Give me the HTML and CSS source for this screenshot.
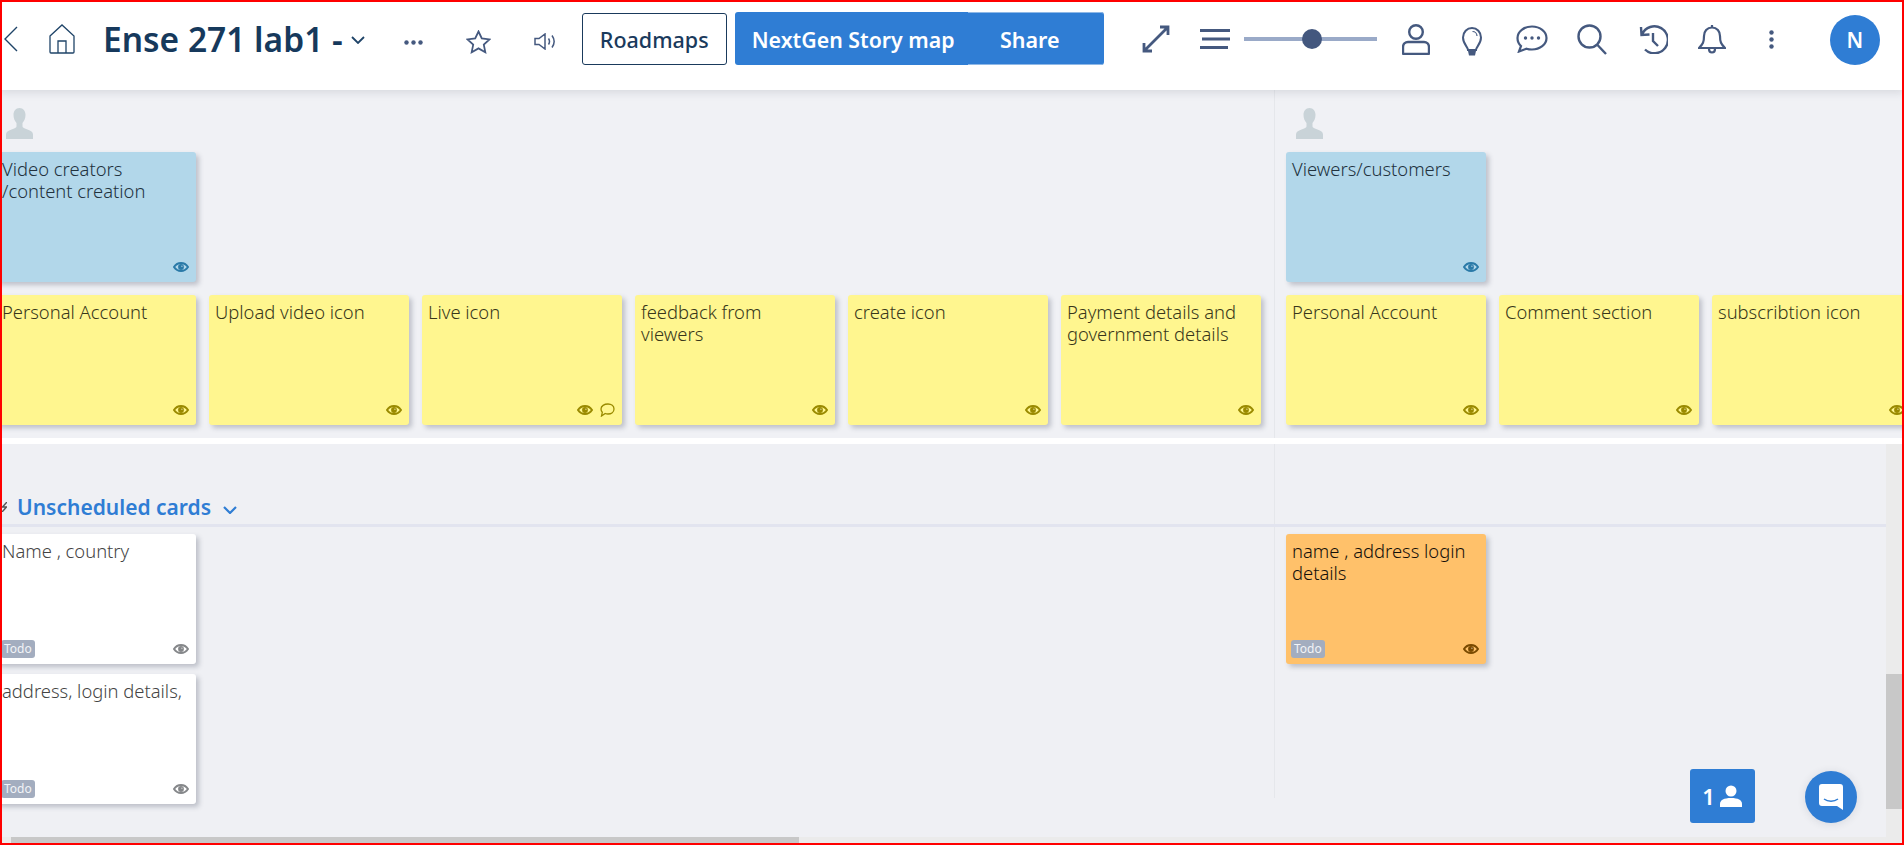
FILE: index.html
```html
<!DOCTYPE html>
<html lang="en">
<head>
  <meta charset="UTF-8">
  <title>Ense 271 lab1 - Story map</title>
  <link rel="stylesheet" href="styles.css">
</head>
<body>

<!-- shared icons -->
<svg class="sprite" xmlns="http://www.w3.org/2000/svg">
  <symbol id="eye" viewBox="0 0 16 10">
    <path d="M1 5C3 2 5.400 1 8 1s5 1 7 4c-2 3-4.400 4-7 4S3 8 1 5z" fill="none" stroke="currentColor" stroke-width="2"/>
    <circle cx="8" cy="5" r="2.900" fill="currentColor"/>
    <circle cx="8.900" cy="4.200" r=".8" fill="#fff" fill-opacity=".55"/>
  </symbol>
  <symbol id="persona" viewBox="0 0 27 31">
    <path d="M13.500 0c3.800 0 6 3 6 6.800 0 3.200-1.200 6.400-3 8.200v3.400c0 1.200 2 2 5 3 3.400 1.100 5.500 2.600 5.500 5V31H0v-4.600c0-2.400 2.100-3.900 5.500-5 3-1 5-1.800 5-3V15c-1.800-1.800-3-5-3-8.200C7.500 3 9.700 0 13.500 0z" fill="currentColor"/>
  </symbol>
</svg>

<!-- === Top bar === -->
<header class="topbar">
  <svg class="ico ico-back" viewBox="0 0 14 26"><path d="M13 1 1 13l12 12"/></svg>
  <svg class="ico ico-home" viewBox="0 0 26 30"><path d="M1 12 13 1l12 11v16a1 1 0 0 1-1 1H2a1 1 0 0 1-1-1zM9 29V17h8v12"/></svg>
  <h1 class="board-title">Ense 271 lab1 -</h1>
  <svg class="ico ico-caret" viewBox="0 0 14 8"><path d="m1 1 6 6 6-6"/></svg>
  <svg class="ico-dots" viewBox="0 0 19 5"><circle cx="2.500" cy="2.500" r="2.200"/><circle cx="9.500" cy="2.500" r="2.200"/><circle cx="16.500" cy="2.500" r="2.200"/></svg>
  <svg class="ico ico-star" viewBox="0 0 25 24"><path d="m12.500 1.500 3.300 7 7.700.9-5.700 5.200 1.500 7.600-6.800-3.800-6.800 3.800 1.500-7.600L1.500 9.400l7.700-.9z"/></svg>
  <svg class="ico ico-sound" viewBox="0 0 22 17"><path d="M1 5.500h4L11 1v15l-6-4.500H1zM14.500 5.500c1.200 1.800 1.200 4.200 0 6M18 2.500c2.600 3.600 2.600 8.400 0 12"/></svg>
  <button class="btn-roadmaps">Roadmaps</button>
  <div class="btn-group">
    <button class="btn-story">NextGen Story map</button>
    <button class="btn-share">Share</button>
  </div>
  <svg class="ico ico-expand" viewBox="0 0 28 28"><path d="M2 26 26 2M18 2h8v8M2 18v8h8"/></svg>
  <svg class="ico ico-menu" viewBox="0 0 30 20"><path d="M0 1.500h30M2 10h28M0 18.500h28"/></svg>
  <div class="zoom-slider"><span class="zoom-knob"></span></div>
  <svg class="ico ico-user" viewBox="0 0 28 31"><circle cx="14" cy="8" r="6.800"/><path d="M6 18h16a5 5 0 0 1 5 5v6a1 1 0 0 1-1 1H2a1 1 0 0 1-1-1v-6a5 5 0 0 1 5-5z"/></svg>
  <svg class="ico ico-bulb" viewBox="0 0 20 29"><path d="M6 23c0-3-5-6-5-12.500C1 5 5 1 10 1s9 4 9 9.500C19 17 14 20 14 23z"/><path d="M10.500 4.500c2.500 0 4.500 2 4.500 4.500" stroke-width="1.200"/><path d="M6 24h8l-1 4.500H7z" class="ico-fill"/></svg>
  <svg class="ico ico-chat" viewBox="0 0 32 28"><path d="M16 1.500c8 0 14.500 5 14.500 11.500S24 24.500 16 24.500c-2 0-4-.3-5.500-.8L3 26.500l2-5.500C2.800 19 1.500 16 1.500 13 1.500 6.500 8 1.500 16 1.500z"/><circle class="ico-fill" cx="9.500" cy="13" r="1.700"/><circle class="ico-fill" cx="16" cy="13" r="1.700"/><circle class="ico-fill" cx="22.500" cy="13" r="1.700"/></svg>
  <svg class="ico ico-search" viewBox="0 0 30 31"><circle cx="12.500" cy="12.500" r="11"/><path d="m20.500 21 8.500 9"/></svg>
  <svg class="ico ico-history" viewBox="0 0 31 29"><path d="M5 9.500A13.500 13.500 0 1 1 8 24.500M4 2l.5 8 8-.5M16 8v8l5 5"/></svg>
  <svg class="ico ico-bell" viewBox="0 0 28 30"><path d="M14 3.500c5 0 8 4 8 8.500 0 6 1 8 5 12H1c4-4 5-6 5-12 0-4.500 3-8.500 8-8.500zM14 1v2.500M11 25c0 2 1.300 3.500 3 3.500s3-1.500 3-3.500"/></svg>
  <svg class="ico-kebab" viewBox="0 0 5 19"><circle cx="2.500" cy="2.500" r="2.200"/><circle cx="2.500" cy="9.500" r="2.200"/><circle cx="2.500" cy="16.500" r="2.200"/></svg>
  <div class="avatar">N</div>
</header>

<!-- === Story map, activities and steps === -->
<section class="board-top">
  <div class="activity activity-first">
    <svg class="persona"><use href="#persona"/></svg>
    <div class="card card-blue">
      <p class="card-text">Video creators /content creation</p>
      <div class="card-foot"><svg class="eye"><use href="#eye"/></svg></div>
    </div>
    <div class="card-row">
      <div class="card card-yellow">
        <p class="card-text">Personal Account</p>
        <div class="card-foot"><svg class="eye"><use href="#eye"/></svg></div>
      </div>
      <div class="card card-yellow">
        <p class="card-text">Upload video icon</p>
        <div class="card-foot"><svg class="eye"><use href="#eye"/></svg></div>
      </div>
      <div class="card card-yellow">
        <p class="card-text">Live icon</p>
        <div class="card-foot">
          <svg class="eye"><use href="#eye"/></svg>
          <svg class="comment" viewBox="0 0 15 14"><path d="M8 1c3.300 0 6 2 6 5s-2.700 5-6 5c-1 0-2-.2-2.800-.5L1.500 13l.8-3.700C1.400 8.400 1 7.300 1 6c0-3 3.200-5 7-5z"/></svg>
        </div>
      </div>
      <div class="card card-yellow">
        <p class="card-text">feedback from viewers</p>
        <div class="card-foot"><svg class="eye"><use href="#eye"/></svg></div>
      </div>
      <div class="card card-yellow">
        <p class="card-text">create icon</p>
        <div class="card-foot"><svg class="eye"><use href="#eye"/></svg></div>
      </div>
      <div class="card card-yellow">
        <p class="card-text">Payment details and government details</p>
        <div class="card-foot"><svg class="eye"><use href="#eye"/></svg></div>
      </div>
    </div>
  </div>
  <div class="activity activity-second">
    <svg class="persona"><use href="#persona"/></svg>
    <div class="card card-blue">
      <p class="card-text">Viewers/customers</p>
      <div class="card-foot"><svg class="eye"><use href="#eye"/></svg></div>
    </div>
    <div class="card-row">
      <div class="card card-yellow">
        <p class="card-text">Personal Account</p>
        <div class="card-foot"><svg class="eye"><use href="#eye"/></svg></div>
      </div>
      <div class="card card-yellow">
        <p class="card-text">Comment section</p>
        <div class="card-foot"><svg class="eye"><use href="#eye"/></svg></div>
      </div>
      <div class="card card-yellow">
        <p class="card-text">subscribtion icon</p>
        <div class="card-foot"><svg class="eye"><use href="#eye"/></svg></div>
      </div>
    </div>
  </div>
</section>

<!-- === Unscheduled lane === -->
<section class="board-bottom">
  <div class="lane-view">
    <div class="lane">
      <div class="lane-head">
        <svg class="lane-grip" viewBox="0 0 5 10"><path d="M5 0 .5 5h4L0 10"/></svg>
        <h2 class="lane-title">Unscheduled cards</h2>
        <svg class="lane-caret" viewBox="0 0 14 8"><path d="m1 1 6 6 6-6"/></svg>
      </div>
      <div class="lane-cols">
        <div class="lane-col lane-col-first">
          <div class="card card-white">
            <p class="card-text">Name , country</p>
            <div class="card-foot"><span class="badge">Todo</span><svg class="eye"><use href="#eye"/></svg></div>
          </div>
          <div class="card card-white">
            <p class="card-text">address, login details,</p>
            <div class="card-foot"><span class="badge">Todo</span><svg class="eye"><use href="#eye"/></svg></div>
          </div>
        </div>
        <div class="lane-col lane-col-second">
          <div class="card card-orange">
            <p class="card-text">name , address login details</p>
            <div class="card-foot"><span class="badge">Todo</span><svg class="eye"><use href="#eye"/></svg></div>
          </div>
        </div>
      </div>
    </div>
    <div class="hbar"><span class="hbar-thumb"></span></div>
  </div>
  <div class="vbar"><span class="vbar-thumb"></span></div>

  <button class="online-btn">1
    <svg viewBox="0 0 24 22"><circle cx="12" cy="6" r="5.500"/><path d="M1 22v-3c0-4 4-6 11-6s11 2 11 6v3z"/></svg>
  </button>
  <button class="help-btn">
    <svg viewBox="0 0 24 26"><path d="M3 0h18a3 3 0 0 1 3 3v23l-6-4H3a3 3 0 0 1-3-3V3a3 3 0 0 1 3-3z"/><path class="help-smile" d="M5 15c4 3 10 3 14 0"/></svg>
  </button>
</section>

<div class="frame"></div>

</body>
</html>
```

FILE: styles.css
```css
/* ===== Global ===== */
* {
  margin: 0;
  padding: 0;
  box-sizing: border-box;
}
html, body {
  height: 845px;
  overflow: hidden;
}
body {
  font-family: "Noto Sans", "Open Sans", sans-serif;
  background: #fff;
  color: #1a3a5c;
  display: flex;
  flex-direction: column;
}
button {
  font-family: inherit;
  border: none;
  cursor: pointer;
}
.sprite {
  display: none;
}
/* red outline of the capture */
.frame {
  position: fixed;
  inset: 0;
  border: 2px solid #f00;
  pointer-events: none;
  z-index: 10;
}

/* ===== Top bar ===== */
.topbar {
  height: 90px;
  flex: none;
  background: #fff;
  display: flex;
  align-items: center;
  box-shadow: 0 2px 9px rgba(40, 50, 70, 0.14);
  position: relative;
  z-index: 2;
  white-space: nowrap;
}
.ico {
  flex: none;
  fill: none;
  stroke: #45597f;
  stroke-width: 2.4;
}
.ico-fill {
  fill: #45597f;
  stroke: none;
}
.ico-back {
  width: 14px;
  height: 26px;
  margin-left: 4px;
  margin-top: -13px;
  stroke: #1f4468;
  stroke-width: 1.4;
}
.ico-home {
  width: 26px;
  height: 30px;
  margin-left: 31px;
  margin-top: -12px;
  stroke: #1f4468;
  stroke-width: 1.3;
}
.board-title {
  margin-left: 28px;
  margin-top: -12px;
  font-size: 33.5px;
  font-weight: 600;
  line-height: 40px;
  color: #16395c;
}
.ico-caret {
  width: 14px;
  height: 8px;
  margin-left: 8px;
  margin-top: -10px;
  stroke: #1f4468;
  stroke-width: 1.800;
}
.ico-dots {
  flex: none;
  width: 19px;
  height: 5px;
  margin-left: 39px;
  margin-top: -6px;
  fill: #45597f;
}
.ico-star {
  width: 25px;
  height: 24px;
  margin-left: 43px;
  margin-top: -7px;
  stroke-width: 1.800;
}
.ico-sound {
  width: 22px;
  height: 17px;
  margin-left: 43px;
  margin-top: -7px;
  stroke-width: 1.500;
}
.btn-roadmaps {
  width: 145px;
  height: 52px;
  margin-left: 26px;
  margin-top: -13px;
  background: #fff;
  border: 1px solid #1a3a5c;
  border-radius: 3px;
  font-size: 21.5px;
  font-weight: 500;
  color: #1a3a5c;
  padding-top: 1px;
}
.btn-group {
  display: flex;
  flex: none;
  width: 369px;
  height: 53px;
  margin-left: 8px;
  margin-top: -13px;
  background: #2f7dd4;
  border-radius: 3px;
  color: #fff;
}
.btn-story, .btn-share {
  background: none;
  color: #fff;
  font-weight: 600;
  padding-top: 2px;
}
.btn-story {
  width: 233px;
  padding-left: 17px;
  text-align: left;
  font-size: 21.3px;
}
.btn-share {
  width: 136px;
  padding-right: 12px;
  border-top: 1px solid #8fb8e6;
  border-bottom: 1px solid #8fb8e6;
  border-radius: 0 3px 3px 0;
  font-size: 21.5px;
}
.ico-expand {
  width: 28px;
  height: 28px;
  margin-left: 38px;
  margin-top: -12px;
  stroke-width: 2.800;
}
.ico-menu {
  width: 30px;
  height: 20px;
  margin-left: 30px;
  margin-top: -12px;
  stroke-width: 2.800;
}
.zoom-slider {
  flex: none;
  width: 133px;
  height: 4px;
  margin-left: 14px;
  margin-top: -12px;
  background: #9aaac8;
  display: flex;
  align-items: center;
  padding-left: 58px;
}
.zoom-knob {
  width: 20px;
  height: 20px;
  border-radius: 50%;
  background: #43577e;
  flex: none;
}
.ico-user {
  width: 28px;
  height: 31px;
  margin-left: 25px;
  margin-top: -12px;
}
.ico-bulb {
  width: 20px;
  height: 29px;
  margin-left: 32px;
  margin-top: -8px;
  stroke-width: 2;
}
.ico-chat {
  width: 32px;
  height: 28px;
  margin-left: 34px;
  margin-top: -12px;
  stroke-width: 2.200;
}
.ico-search {
  width: 30px;
  height: 31px;
  margin-left: 29px;
  margin-top: -12px;
}
.ico-history {
  width: 31px;
  height: 29px;
  margin-left: 30px;
  margin-top: -12px;
}
.ico-bell {
  width: 28px;
  height: 30px;
  margin-left: 30px;
  margin-top: -12px;
  stroke-width: 2.200;
}
.ico-kebab {
  flex: none;
  width: 5px;
  height: 19px;
  margin-left: 43px;
  margin-top: -12px;
  fill: #45597f;
}
.avatar {
  flex: none;
  width: 50px;
  height: 50px;
  margin-left: 56px;
  margin-top: -10px;
  border-radius: 50%;
  background: #2f7dd4;
  color: #fff;
  display: flex;
  align-items: center;
  justify-content: center;
  font-size: 21px;
  font-weight: 600;
}

/* ===== Cards ===== */
.card {
  flex: none;
  width: 200px;
  height: 130px;
  padding: 6px 7px 6px 6px;
  border-radius: 3px;
  display: flex;
  flex-direction: column;
  box-shadow: 3px 3px 5px rgba(60, 70, 90, 0.28);
}
.card-text {
  flex: 1;
  padding-right: 3px;
  font-size: 18.4px;
  line-height: 22px;
  font-weight: 300;
}
.card-foot {
  height: 18px;
  margin-left: -1px;
  display: flex;
  align-items: center;
  justify-content: flex-end;
  gap: 7px;
}
.eye {
  width: 16px;
  height: 10px;
  flex: none;
}
.comment {
  width: 15px;
  height: 14px;
  flex: none;
  fill: none;
  stroke: currentColor;
  stroke-width: 1.300;
}
.badge {
  margin-right: auto;
  height: 18px;
  padding: 0 3px;
  border-radius: 3px;
  background: #a3adbf;
  color: #f2f4f7;
  font-size: 12px;
  line-height: 17px;
}
.card-blue {
  background: #b2d7ea;
  color: #22323e;
}
.card-blue .eye {
  color: #2a7aa8;
}
.card-yellow {
  background: #fff68f;
  color: #38361a;
}
.card-yellow .card-foot {
  color: #9a8a00;
}
.card-white {
  background: #fff;
  color: #444;
}
.card-white .eye {
  color: #85878a;
}
.card-orange {
  background: #ffc16a;
  color: #14100a;
}
.card-orange .eye {
  color: #7a4a00;
}

/* ===== Story map ===== */
.board-top {
  height: 348px;
  flex: none;
  display: flex;
  background: #f0f1f5;
  overflow: hidden;
}
.activity {
  flex: none;
}
.activity-first {
  width: 1279px;
  margin-left: -4px;
  border-right: 1px solid #e5e7eb;
}
.activity-second {
  padding-left: 11px;
}
.persona {
  display: block;
  width: 27px;
  height: 31px;
  margin: 18px 0 13px 10px;
  color: #c9d3d8;
}
.card-row {
  display: flex;
  gap: 13px;
  margin-top: 13px;
}

/* ===== Unscheduled lane ===== */
.board-bottom {
  flex: 1;
  margin-top: 6px;
  padding-bottom: 2px;
  background: #eff0f4;
  display: flex;
  position: relative;
  overflow: hidden;
}
.lane-view {
  flex: 1;
  min-width: 0;
  display: flex;
  flex-direction: column;
}
.lane {
  flex: 1;
  overflow: hidden;
}
.lane-head {
  height: 83px;
  padding: 46px 0 0 2px;
  display: flex;
  align-items: center;
  border-bottom: 3px solid #e2e4ef;
  background: linear-gradient(#e5e7eb, #e5e7eb) 1274px 0 / 1px 100% no-repeat;
}
.lane-grip {
  width: 5px;
  height: 10px;
  flex: none;
  fill: none;
  stroke: #555;
  stroke-width: 1.500;
}
.lane-title {
  margin-left: 10px;
  font-size: 21px;
  font-weight: 600;
  line-height: 28px;
  color: #2f7dd4;
}
.lane-caret {
  width: 14px;
  height: 8px;
  margin-left: 12px;
  margin-top: 6px;
  fill: none;
  stroke: #2f7dd4;
  stroke-width: 2.200;
}
.lane-cols {
  display: flex;
  margin-left: -4px;
  height: 271px;
}
.lane-col {
  flex: none;
  display: flex;
  flex-direction: column;
  gap: 10px;
  padding-top: 7px;
}
.lane-col-first {
  width: 1279px;
  border-right: 1px solid #e5e7eb;
}
.lane-col-second {
  padding-left: 11px;
}
.hbar {
  height: 6px;
  flex: none;
  background: #ebebeb;
  padding-left: 11px;
}
.hbar-thumb {
  display: block;
  width: 788px;
  height: 6px;
  background: #c8c8c8;
}
.vbar {
  width: 18px;
  flex: none;
  background: #ebebeb;
  padding-top: 230px;
}
.vbar-thumb {
  display: block;
  height: 135px;
  background: #c8c8c8;
}

/* floating buttons, over the board */
.online-btn {
  position: absolute;
  left: 1690px;
  top: 325px;
  width: 65px;
  height: 54px;
  border-radius: 3px;
  background: #2f7dd4;
  color: #fff;
  font-size: 22px;
  font-weight: 600;
  display: flex;
  align-items: center;
  justify-content: center;
  gap: 4px;
}
.online-btn svg {
  width: 24px;
  height: 22px;
  fill: #fff;
}
.help-btn {
  position: absolute;
  left: 1805px;
  top: 327px;
  width: 52px;
  height: 52px;
  border-radius: 50%;
  background: #2f7dd4;
  box-shadow: 0 1px 8px rgba(40, 50, 70, 0.12);
  display: flex;
  align-items: center;
  justify-content: center;
}
.help-btn svg {
  width: 24px;
  height: 26px;
  fill: #fff;
}
.help-smile {
  fill: none;
  stroke: #2f7dd4;
  stroke-width: 1.500;
}
```
